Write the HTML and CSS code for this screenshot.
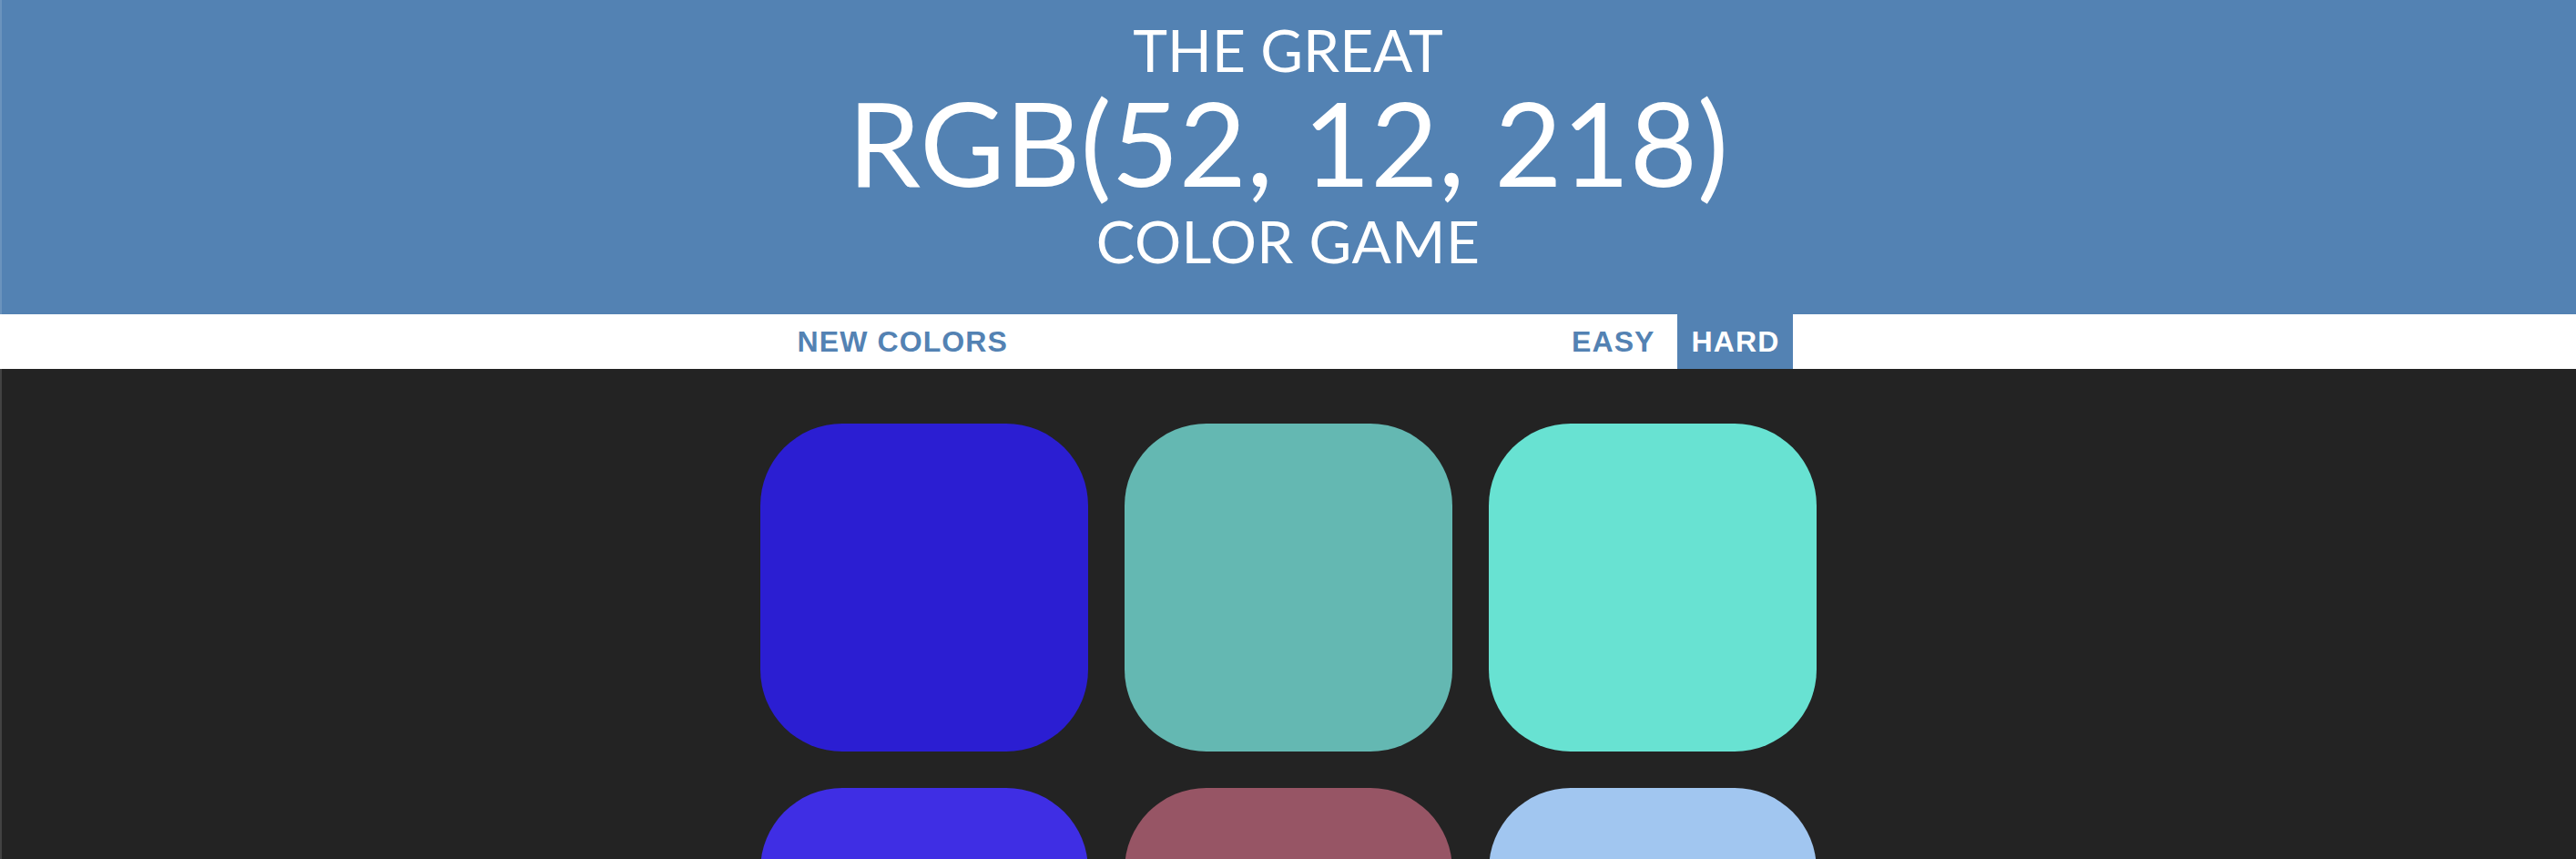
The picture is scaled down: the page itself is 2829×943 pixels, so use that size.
FILE: index.html
```html
<!DOCTYPE html>
<html lang="en">
<head>
<meta charset="utf-8">
<title>Color Game</title>
<link rel="stylesheet" href="styles.css">
</head>
<body>
<div class="edge"></div>
<header class="title">
  <div class="title-small">The Great</div>
  <div class="title-rgb">RGB(52, 12, 218)</div>
  <div class="title-small title-last">Color Game</div>
</header>
<nav class="stripe">
  <button class="btn">New Colors</button>
  <span class="message"></span>
  <button class="btn">Easy</button>
  <button class="btn btn-selected">Hard</button>
</nav>
<main class="board">
  <div class="square" style="background: #2b1ed2"></div>
  <div class="square" style="background: #64b8b2"></div>
  <div class="square" style="background: #68e2d2"></div>
  <div class="square" style="background: #3f2ee4"></div>
  <div class="square" style="background: #975565"></div>
  <div class="square" style="background: #a1c6f0"></div>
</main>
</body>
</html>
```
FILE: styles.css
```css
html, body {
  margin: 0;
  padding: 0;
  overflow: hidden;
}
body {
  background: #232323;
  font-family: "Lato", "Liberation Sans", sans-serif;
}
.edge {
  position: fixed;
  left: 0;
  top: 0;
  bottom: 0;
  width: 2px;
  background: rgba(255, 255, 255, 0.14);
}
.title {
  background: #5382b3;
  color: #ffffff;
  text-align: center;
  text-transform: uppercase;
  font-weight: 400;
  padding: 20px 0 45px;
}
.title-small {
  font-size: 64px;
  line-height: 70px;
}
.title-rgb {
  font-size: 128px;
  line-height: 132px;
}
.title-last {
  margin-top: 8px;
  letter-spacing: 0.4px;
}
.stripe {
  background: #ffffff;
  height: 60px;
  display: flex;
  justify-content: center;
  align-items: stretch;
  gap: 9px;
}
.btn {
  border: none;
  background: none;
  margin: 0;
  padding: 0 15px 0 16px;
  height: 60px;
  text-transform: uppercase;
  font-family: "Liberation Sans", Arial, sans-serif;
  font-weight: 700;
  font-size: 32px;
  letter-spacing: 1.1px;
  color: #5382b3;
  outline: none;
}
.btn-selected {
  background: #5382b3;
  color: #ffffff;
}
.message {
  width: 570px;
}
.board {
  width: 1200px;
  margin: 40px auto 0;
  padding: 20px;
  box-sizing: border-box;
  display: grid;
  grid-template-columns: repeat(3, 360px);
  gap: 40px;
}
.square {
  width: 360px;
  height: 360px;
  border-radius: 90px;
}
```
